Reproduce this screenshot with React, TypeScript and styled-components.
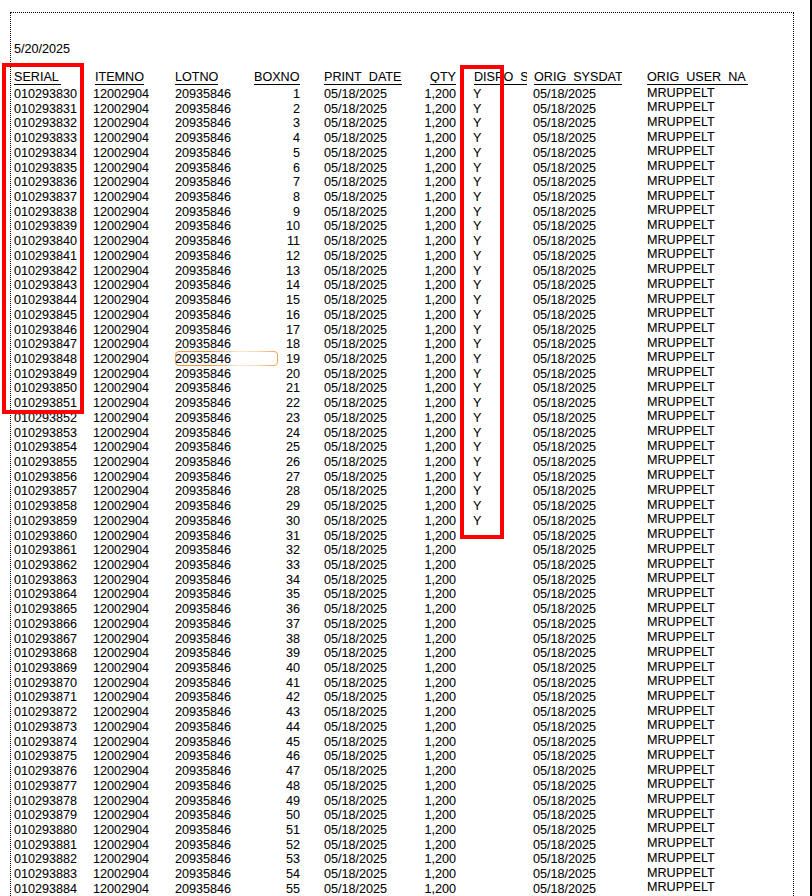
import React from "react";
import styled, { createGlobalStyle } from "styled-components";

const Global = createGlobalStyle`
  html, body { margin: 0; padding: 0; background: #fff; }
`;

const Page = styled.div`
  position: relative;
  box-sizing: border-box;
  width: 812px;
  height: 896px;
  overflow: hidden;
  background: #fff;
  border-right: 2px solid #000;
  padding: 12px 0 0 10px;
  font-family: "Liberation Sans", Arial, sans-serif;
  font-size: 12.6px;
  color: #000;
  -webkit-text-stroke: 0.07px #000;
`;

const Sheet = styled.div`
  box-sizing: border-box;
  width: 784px;
  min-height: 1000px;
  border: 1px dotted #000;
  padding: 29px 0 0 3px;
`;

const DateLine = styled.div`
  height: 29px;
  line-height: 15px;
`;

const Columns = "79px 82px 79px 70px 100px 49px 60px 114px 140px";

const HeadRow = styled.div`
  display: grid;
  grid-template-columns: ${Columns};
  height: 14px;
  line-height: 13px;
  margin-bottom: 2px;
`;

const Head = styled.div<{ $width: number; $left?: number; $right?: boolean }>`
  box-sizing: border-box;
  width: ${(p) => p.$width}px;
  margin-left: ${(p) => p.$left ?? 0}px;
  border-bottom: 1px solid #000;
  white-space: nowrap;
  text-align: ${(p) => (p.$right ? "right" : "left")};
`;

/* The underscore of a heading melts into the rule below it, as in the print. */
const HeadText = styled.div`
  height: 12px;
  overflow: hidden;
`;

const Row = styled.div`
  display: grid;
  grid-template-columns: ${Columns};
  height: 14.72px;
  line-height: 14.72px;
  white-space: nowrap;
`;

const NumberCell = styled.div<{ $pad: number }>`
  text-align: right;
  padding-right: ${(p) => p.$pad}px;
`;

const UserCell = styled.div`
  margin-top: -1.5px;
`;

const RedBox = styled.div<{ $x: number; $y: number; $w: number; $h: number }>`
  position: absolute;
  box-sizing: border-box;
  left: ${(p) => p.$x}px;
  top: ${(p) => p.$y}px;
  width: ${(p) => p.$w}px;
  height: ${(p) => p.$h}px;
  border: 4px solid #f00;
`;

const FocusBox = styled.div`
  position: absolute;
  box-sizing: border-box;
  left: 175px;
  top: 351px;
  width: 103px;
  height: 15px;
  border-radius: 4px;
  padding: 1px;
  background: linear-gradient(90deg, #f59a4a 0%, #f59a4a 35%, #fde9d8 62%, #fbd5b0 82%, #f59a4a 100%);
  -webkit-mask: linear-gradient(#000 0 0) content-box, linear-gradient(#000 0 0);
  -webkit-mask-composite: xor;
  mask-composite: exclude;
`;

const headings: { label: string; width: number; left?: number; right?: boolean }[] = [
  { label: "SERIAL", width: 47 },
  { label: "ITEMNO", width: 49, left: 2 },
  { label: "LOTNO", width: 43 },
  { label: "BOXNO", width: 46 },
  { label: "PRINT_DATE", width: 78 },
  { label: "QTY", width: 26, left: 6, right: true },
  { label: "DISPO_S", width: 53, left: 1 },
  { label: "ORIG_SYSDAT", width: 88, left: 1 },
  { label: "ORIG_USER_NA", width: 101 },
];

const rows = Array.from({ length: 55 }, (_, i) => i);

export default function App() {
  return (
    <>
      <Global />
      <Page>
        <Sheet>
          <DateLine>5/20/2025</DateLine>
          <HeadRow>
            {headings.map((h) => (
              <Head key={h.label} $width={h.width} $left={h.left} $right={h.right}>
                <HeadText>{h.label}</HeadText>
              </Head>
            ))}
          </HeadRow>
          {rows.map((i) => (
            <Row key={i}>
              <div>{String(10293830 + i).padStart(9, "0")}</div>
              <div>12002904</div>
              <div>20935846</div>
              <NumberCell $pad={24}>{i + 1}</NumberCell>
              <div>05/18/2025</div>
              <NumberCell $pad={17}>1,200</NumberCell>
              <div>{i < 30 ? "Y" : ""}</div>
              <div>05/18/2025</div>
              <UserCell>MRUPPELT</UserCell>
            </Row>
          ))}
        </Sheet>
        <FocusBox />
        <RedBox $x={2} $y={63} $w={82} $h={351} />
        <RedBox $x={460} $y={65} $w={44} $h={474} />
      </Page>
    </>
  );
}
